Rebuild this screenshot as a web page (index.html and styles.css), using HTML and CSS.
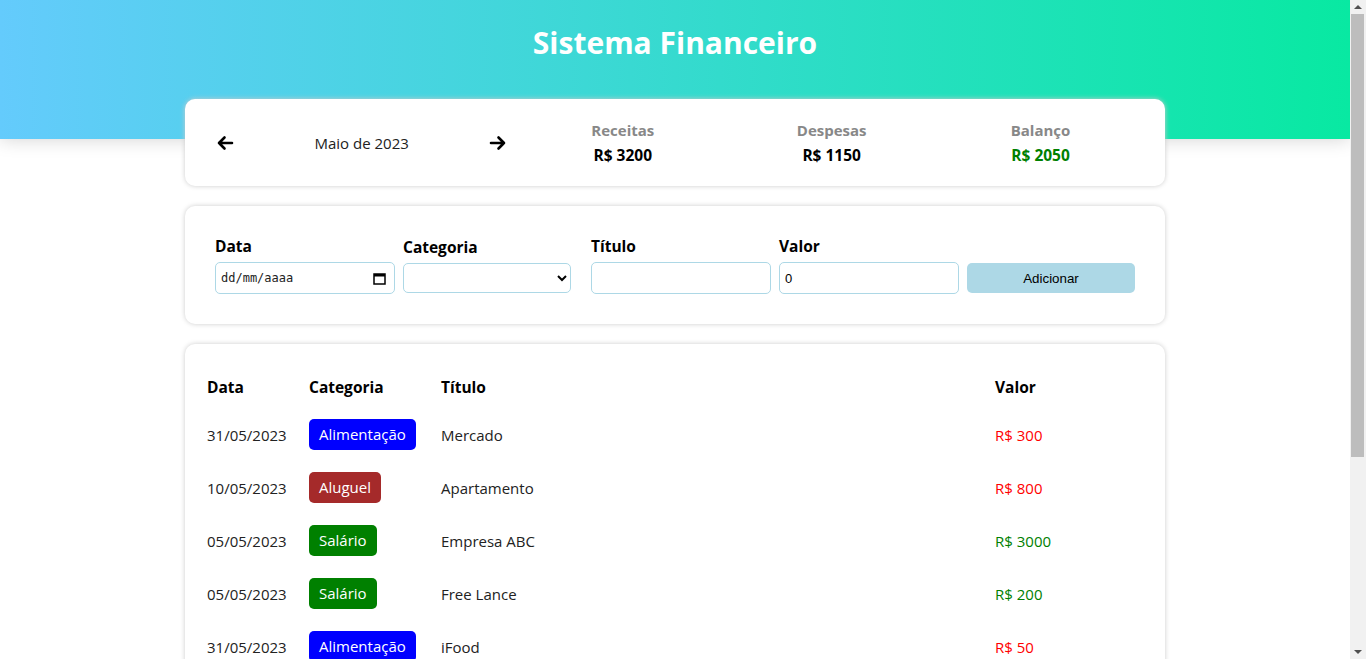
FILE: index.html
```html
<!DOCTYPE html>
<html lang="pt-BR">
<head>
<meta charset="utf-8">
<title>Sistema Financeiro</title>
<link rel="stylesheet" href="styles.css">
</head>
<body>
  <div class="page">
    <header class="header">
      <h1 class="header-title">Sistema Financeiro</h1>
    </header>
    <main class="container">
      <section class="card info-card">
        <div class="month-area">
          <button class="month-arrow" aria-label="Mês anterior">
            <svg width="18" height="16" viewBox="0 0 18 16"><path d="M16 8H3M8.5 2.5L3 8l5.5 5.5" fill="none" stroke="#000" stroke-width="2.6" stroke-linecap="round" stroke-linejoin="round"/></svg>
          </button>
          <div class="month-title">Maio de 2023</div>
          <button class="month-arrow" aria-label="Próximo mês">
            <svg width="18" height="16" viewBox="0 0 18 16"><path d="M2 8h13M9.5 2.5L15 8l-5.5 5.5" fill="none" stroke="#000" stroke-width="2.6" stroke-linecap="round" stroke-linejoin="round"/></svg>
          </button>
        </div>
        <div class="resume-area">
          <div class="resume-item">
            <div class="resume-title">Receitas</div>
            <div class="resume-value">R$ 3200</div>
          </div>
          <div class="resume-item">
            <div class="resume-title">Despesas</div>
            <div class="resume-value">R$ 1150</div>
          </div>
          <div class="resume-item">
            <div class="resume-title">Balanço</div>
            <div class="resume-value positive">R$ 2050</div>
          </div>
        </div>
      </section>

      <section class="card form-card">
        <div class="form-item">
          <label class="form-label">Data</label>
          <div class="date-field">
            <input class="date-text" type="text" placeholder="dd/mm/aaaa">
            <svg class="date-icon" width="13" height="13" viewBox="0 0 13 13"><rect x="1" y="2" width="11" height="10" fill="none" stroke="#000" stroke-width="1.5"/><rect x="1" y="2" width="11" height="2.5" fill="#000"/></svg>
          </div>
        </div>
        <div class="form-item">
          <label class="form-label">Categoria</label>
          <select class="form-select"><option></option><option>Alimentação</option><option>Aluguel</option><option>Salário</option></select>
        </div>
        <div class="form-item">
          <label class="form-label">Título</label>
          <input class="form-input" type="text">
        </div>
        <div class="form-item">
          <label class="form-label">Valor</label>
          <input class="form-input" type="number" value="0">
        </div>
        <div class="form-item">
          <label class="form-label">&nbsp;</label>
          <button class="form-button">Adicionar</button>
        </div>
      </section>

      <section class="card table-card">
        <table class="table">
          <thead>
            <tr>
              <th class="col-date">Data</th>
              <th class="col-cat">Categoria</th>
              <th>Título</th>
              <th class="col-value">Valor</th>
            </tr>
          </thead>
          <tbody>
            <tr>
              <td>31/05/2023</td>
              <td><span class="badge food">Alimentação</span></td>
              <td>Mercado</td>
              <td class="expense">R$ 300</td>
            </tr>
            <tr>
              <td>10/05/2023</td>
              <td><span class="badge rent">Aluguel</span></td>
              <td>Apartamento</td>
              <td class="expense">R$ 800</td>
            </tr>
            <tr>
              <td>05/05/2023</td>
              <td><span class="badge salary">Salário</span></td>
              <td>Empresa ABC</td>
              <td class="income">R$ 3000</td>
            </tr>
            <tr>
              <td>05/05/2023</td>
              <td><span class="badge salary">Salário</span></td>
              <td>Free Lance</td>
              <td class="income">R$ 200</td>
            </tr>
            <tr>
              <td>31/05/2023</td>
              <td><span class="badge food">Alimentação</span></td>
              <td>iFood</td>
              <td class="expense">R$ 50</td>
            </tr>
          </tbody>
        </table>
      </section>
    </main>
  </div>
  <div class="scrollbar" aria-hidden="true">
    <div class="scroll-btn"><span class="tri up"></span></div>
    <div class="scroll-track"><div class="scroll-thumb"></div></div>
    <div class="scroll-btn"><span class="tri down"></span></div>
  </div>
</body>
</html>
```
FILE: styles.css
```css
* {
  box-sizing: border-box;
}

html, body {
  height: 100%;
}

body {
  margin: 0;
  display: flex;
  overflow: hidden;
  background: #fff;
  font-family: "Open Sans", "Noto Sans", sans-serif;
  font-size: 15px;
  color: #000;
}

.page {
  flex: 1;
  min-width: 0;
  height: 100%;
  overflow: hidden;
}

/* Scrollbar */
.scrollbar {
  flex: none;
  width: 16px;
  height: 100%;
  background: #f1f1f1;
  display: flex;
  flex-direction: column;
}

.scroll-btn {
  flex: none;
  height: 14px;
  display: flex;
  align-items: center;
  justify-content: center;
}

.tri {
  width: 0;
  height: 0;
  border-left: 4px solid transparent;
  border-right: 4px solid transparent;
}

.tri.up {
  border-bottom: 4px solid #505050;
}

.tri.down {
  border-top: 4px solid #505050;
}

.scroll-track {
  flex: 1;
  padding: 0 2px 0 1px;
}

.scroll-thumb {
  width: 13px;
  height: 443px;
  background: #bdbdbd;
}

/* Header */
.header {
  height: 139px;
  padding-top: 24px;
  background: linear-gradient(to right, #64cbfc, #08e9a2);
  box-shadow: 0 0 18px rgba(0, 0, 0, 0.18);
  text-align: center;
}

.header-title {
  margin: 0;
  font-size: 30px;
  line-height: 38px;
  font-weight: 700;
  color: #fff;
}

.container {
  width: 980px;
  margin: -40px auto 0;
  display: flex;
  flex-direction: column;
  gap: 20px;
  position: relative;
}

.card {
  background: #fff;
  border-radius: 10px;
  box-shadow: 0 0 5px #ccc;
}

/* Info card */
.info-card {
  padding: 20px;
  display: flex;
  align-items: center;
}

.month-area {
  flex: 1;
  display: flex;
  align-items: center;
}

.month-arrow {
  width: 40px;
  height: 40px;
  border: 0;
  padding: 0;
  background: transparent;
  display: flex;
  align-items: center;
  justify-content: center;
  cursor: pointer;
}

.month-title {
  flex: 1;
  text-align: center;
  font-size: 15px;
  color: #222;
}

.resume-area {
  flex: 2;
  display: flex;
}

.resume-item {
  flex: 1;
  text-align: center;
}

.resume-title {
  font-size: 15px;
  line-height: 23px;
  font-weight: 700;
  color: #888;
  margin-bottom: 3px;
}

.resume-value {
  font-size: 15.5px;
  line-height: 21px;
  font-weight: 700;
  color: #000;
}

.resume-value.positive {
  color: green;
}

/* Form card */
.form-card {
  padding: 30px;
  display: grid;
  grid-template-columns: repeat(5, 180px);
  column-gap: 8px;
  align-items: center;
}

.form-item {
  display: flex;
  flex-direction: column;
}

.form-label {
  font-size: 15.5px;
  line-height: 21px;
  font-weight: 700;
  margin-bottom: 5px;
}

.form-input {
  width: 180px;
  height: 32px;
  padding: 5px;
  border: 1px solid lightblue;
  border-radius: 5px;
  font-family: "Liberation Sans", Arial, sans-serif;
  font-size: 13px;
  outline: none;
}

.date-field {
  width: 180px;
  height: 32px;
  padding: 0 8px 0 5px;
  border: 1px solid lightblue;
  border-radius: 5px;
  display: flex;
  align-items: center;
}

.date-text {
  flex: 1;
  min-width: 0;
  border: 0;
  padding: 0;
  outline: none;
  font-family: "DejaVu Sans Mono", monospace;
  font-size: 12px;
}

.date-text::placeholder {
  color: #222;
}

.date-icon {
  flex: none;
}

.form-select {
  width: 168px;
  height: 30px;
  border: 1px solid lightblue;
  border-radius: 5px;
  background: #fff;
  font-family: "Liberation Sans", Arial, sans-serif;
  font-size: 13px;
}

.form-button {
  width: 168px;
  height: 30px;
  border: 0;
  border-radius: 5px;
  background: lightblue;
  font-family: "Liberation Sans", Arial, sans-serif;
  font-size: 13.33px;
  color: #000;
  cursor: pointer;
}

/* Table card */
.table-card {
  padding: 20px;
}

.table {
  width: 100%;
  border-collapse: collapse;
}

.table th {
  text-align: left;
  font-size: 15.5px;
  font-weight: 700;
  height: 44px;
  padding: 2px 2px 0;
}

.table td {
  height: 53px;
  padding: 0 2px;
  color: #222;
}

.col-date {
  width: 102px;
}

.col-cat {
  width: 132px;
}

.col-value {
  width: 152px;
}

.badge {
  display: inline-block;
  padding: 5px 10px;
  line-height: 21px;
  border-radius: 5px;
  color: #fff;
}

.badge.food {
  background: blue;
}

.badge.rent {
  background: brown;
}

.badge.salary {
  background: green;
}

.table td.expense {
  color: red;
}

.table td.income {
  color: green;
}
```
